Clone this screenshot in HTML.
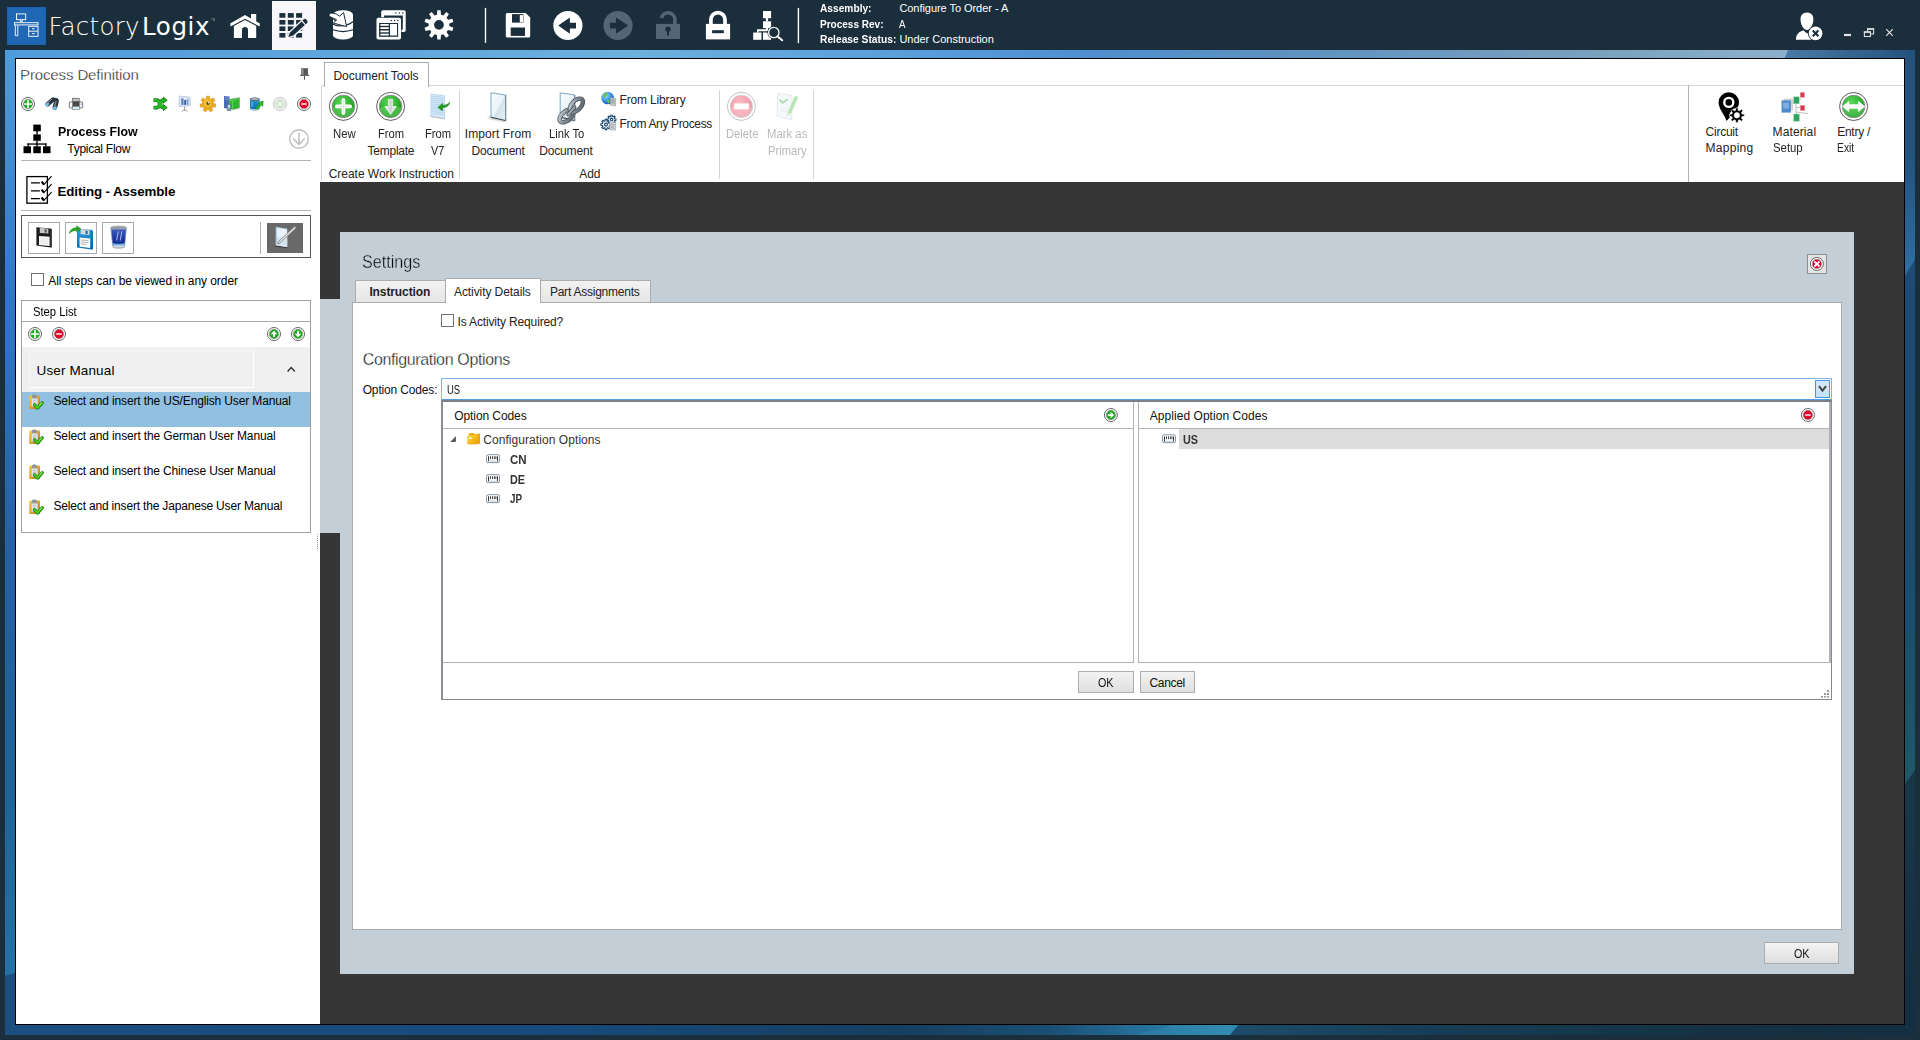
<!DOCTYPE html>
<html lang="en"><head><meta charset="utf-8"><title>FactoryLogix - Process Definition</title>
<style>
html,body{margin:0;padding:0;}
body{width:1920px;height:1040px;overflow:hidden;background:#1b2e3c;position:relative;font-family:"Liberation Sans",sans-serif;}
div,span,svg,label,button{position:absolute;box-sizing:border-box;}
.t{white-space:nowrap;display:block;}
svg{overflow:visible;}
.grp{left:0;top:0;width:0;height:0;}
</style></head><body>
<svg width="1920" height="1040" viewBox="0 0 1920 1040" style="left:0;top:0">
<defs>
<linearGradient id="gt" x1="5" x2="1915" y1="0" y2="0" gradientUnits="userSpaceOnUse">
<stop offset="0" stop-color="#4f9cdc"/><stop offset=".1" stop-color="#58a0dc"/><stop offset=".33" stop-color="#6cb0de"/>
<stop offset=".47" stop-color="#5a9edc"/><stop offset=".57" stop-color="#4f8fcf"/><stop offset=".67" stop-color="#5e92c0"/>
<stop offset=".83" stop-color="#7aa0be"/><stop offset=".93" stop-color="#8cb0cc"/><stop offset="1" stop-color="#8cb0cc"/></linearGradient>
<linearGradient id="gt2" x1="1785" x2="1915" y1="0" y2="0" gradientUnits="userSpaceOnUse">
<stop offset="0" stop-color="#4a7aa6"/><stop offset="1" stop-color="#24507c"/></linearGradient>
<linearGradient id="gl" x1="0" x2="0" y1="50" y2="1035" gradientUnits="userSpaceOnUse">
<stop offset="0" stop-color="#4f9cdc"/><stop offset=".25" stop-color="#2f78c8"/><stop offset=".5" stop-color="#2560a8"/>
<stop offset=".76" stop-color="#1f6496"/><stop offset=".93" stop-color="#2272a6"/><stop offset="1" stop-color="#2272a6"/></linearGradient>
<linearGradient id="gb" x1="5" x2="1915" y1="0" y2="0" gradientUnits="userSpaceOnUse">
<stop offset="0" stop-color="#1a4f80"/><stop offset=".3" stop-color="#174a7a"/><stop offset=".469" stop-color="#163e60"/>
<stop offset=".547" stop-color="#1a4f74"/><stop offset=".589" stop-color="#246c96"/><stop offset=".641" stop-color="#2f88b0"/><stop offset="1" stop-color="#2f88b0"/></linearGradient>
<linearGradient id="gb2" x1="1235" x2="1915" y1="0" y2="0" gradientUnits="userSpaceOnUse">
<stop offset="0" stop-color="#1c4c6a"/><stop offset=".25" stop-color="#173e58"/><stop offset=".7" stop-color="#143243"/><stop offset="1" stop-color="#122e40"/></linearGradient>
<linearGradient id="gr" x1="0" x2="0" y1="50" y2="1035" gradientUnits="userSpaceOnUse">
<stop offset="0" stop-color="#25517d"/><stop offset=".1" stop-color="#24527e"/><stop offset=".25" stop-color="#1d4a74"/><stop offset=".5" stop-color="#1b4a6e"/>
<stop offset=".7" stop-color="#1e5468"/><stop offset=".75" stop-color="#1f5868"/><stop offset="1" stop-color="#1f5868"/></linearGradient>
<linearGradient id="gr2" x1="0" x2="0" y1="150" y2="275" gradientUnits="userSpaceOnUse">
<stop offset="0" stop-color="#3274a8" stop-opacity="0"/><stop offset="1" stop-color="#3274a8" stop-opacity=".9"/></linearGradient>
<linearGradient id="gr3" x1="0" x2="0" y1="770" y2="1035" gradientUnits="userSpaceOnUse">
<stop offset="0" stop-color="#183848"/><stop offset="1" stop-color="#122e40"/></linearGradient>
</defs>
<rect x="0" y="0" width="1920" height="1040" fill="#1b2e3c"/>
<rect x="5" y="50" width="1910" height="10" fill="url(#gt)"/>
<polygon points="1788,50 1915,50 1915,60 1784,60" fill="url(#gt2)"/>
<rect x="5" y="1023" width="1910" height="12" fill="url(#gb)"/>
<polygon points="1135,1035 1172,1025 1232,1023 1232,1035" fill="#3a93b8" opacity=".35"/>
<polygon points="1240,1023 1915,1023 1915,1035 1230,1035" fill="url(#gb2)"/>
<polygon points="5,50 15,60 15,1025 5,1035" fill="url(#gl)"/>
<polygon points="5,976 15,973 15,1025 5,1035" fill="#1a4f80"/>
<polygon points="1915,50 1905,60 1905,1025 1915,1035" fill="url(#gr)"/>
<polygon points="1905,150 1915,150 1915,259 1905,276" fill="url(#gr2)"/>
<polygon points="1905,784 1915,770 1915,1035 1905,1025" fill="url(#gr3)"/>
</svg>
<div style="left:15px;top:58px;width:1890px;height:967px;background:#fff;border:1px solid #000;"></div>
<div id="titlebar" class="grp">
<svg width="1920" height="50" viewBox="0 0 1920 50" style="left:0;top:0">
<rect x="7" y="7" width="39" height="38" fill="#1d62ad"/><rect x="8.5" y="8.5" width="36" height="35" fill="#2068b6"/>
<g fill="none" stroke="#fff" stroke-width="0.9"><rect x="16.5" y="13.9" width="9.2" height="5.8"/><path d="M20.3,19.8v1.8h2v-1.8"/><rect x="14.5" y="22.7" width="23.5" height="2.2"/><path d="M15.3,25v10.7h2.5v-10.7"/><rect x="28.7" y="26.3" width="9.3" height="10"/><path d="M28.7,31.2h9.3M32,28.7h2.6M32,33.7h2.6"/></g>
<g fill="#fff"><path d="M230.2,23.4 L245,15.1 L251,18.5 V14 H256.2 V21.4 L259.9,23.4 L259.6,26.5 L245,18.7 L230.5,26.5Z"/><path d="M233.9,25.9 L245,20.1 L256.2,25.9 V37.9 H248 V30 a3,3 0 0,0 -6,0 V37.9 H233.9Z"/></g>
<rect x="272" y="1" width="44" height="49" fill="#f8f8fa"/>
<g fill="#1b2e3c"><rect x="279.4" y="13.1" width="6" height="4.6"/><rect x="279.4" y="20.0" width="6" height="4.6"/><rect x="279.4" y="26.4" width="6" height="4.6"/><rect x="279.4" y="33.0" width="6" height="4.6"/><rect x="287.8" y="13.1" width="6" height="4.6"/><rect x="287.8" y="20.0" width="6" height="4.6"/><rect x="287.8" y="26.4" width="6" height="4.6"/><rect x="287.8" y="33.0" width="6" height="4.6"/><rect x="296.1" y="13.1" width="6" height="4.6"/><rect x="296.1" y="20.0" width="6" height="4.6"/><rect x="296.1" y="26.4" width="6" height="4.6"/><rect x="296.1" y="33.0" width="6" height="4.6"/></g>
<path d="M288.0,37.1 L290.0,32.2 L303.3,19.6 a2.2,2.2 0 0,1 3.1,0 l0.7,0.8 a2.2,2.2 0 0,1 0,3.1 L293.6,35.6Z" fill="#f8f8fa" stroke="#f8f8fa" stroke-width="2.2" stroke-linejoin="round"/>
<path d="M288.2,36.9 L290.0,32.4 L301.6,21.4 L304.9,24.9 L293.2,35.5Z" fill="#1b2e3c"/>
<path d="M302.4,20.6 L303.6,19.5 a1.9,1.9 0 0,1 2.7,0.1 l0.8,0.9 a1.9,1.9 0 0,1 -0.1,2.7 L305.7,24.2Z" fill="#1b2e3c"/>
<g fill="#fff"><path d="M333,14.5 a10,4.3 0 0,1 20,0 V35.3 a10,4.3 0 0,1 -20,0Z"/></g>
<g fill="none" stroke="#1b2e3c" stroke-width="1.1"><path d="M333,24.2 q10,4.6 20,-2.4"/><path d="M333,29.8 q10,3.6 20,0"/></g>
<path d="M329.1,14.6 C329.5,12.6 333,12.9 336.3,14.0 L339.6,16.2 L343.6,12.6 L346.6,26.6 L333.2,23.0 L336.6,20.0 C333.5,17.3 328.6,17.6 329.1,14.6Z" fill="#fff" stroke="#1b2e3c" stroke-width="1" stroke-linejoin="miter"/>
<path d="M332.9,18.9 q3.5,-0.2 3.6,1.6 q-2.2,0.9 -3.6,-1.6Z" fill="#1b2e3c"/>
<rect x="381.2" y="10.2" width="24.5" height="21.8" rx="1.8" fill="#fff"/>
<path d="M384,15.4 H402.8 V29.5 H400 V18 H384Z" fill="#1b2e3c"/>
<g fill="#1b2e3c"><circle cx="396" cy="13" r="0.75"/><circle cx="399.4" cy="13" r="0.75"/><circle cx="402.8" cy="13" r="0.75"/></g>
<rect x="376" y="17.3" width="25.5" height="22.8" rx="2" fill="#1b2e3c"/>
<rect x="376.5" y="17.8" width="24.5" height="21.8" rx="1.8" fill="#fff"/>
<rect x="379.1" y="23" width="19" height="13.8" fill="#1b2e3c"/>
<g fill="#1b2e3c"><circle cx="391.4" cy="20.4" r="0.75"/><circle cx="394.6" cy="20.4" r="0.75"/><circle cx="397.9" cy="20.4" r="0.75"/></g>
<g fill="#fff"><rect x="380.4" y="24" width="8.4" height="1.8"/><rect x="380.4" y="27.2" width="8.4" height="1.8"/><rect x="380.4" y="30.5" width="8.4" height="1.8"/><rect x="380.4" y="33.7" width="8.4" height="1.8"/><rect x="390" y="24" width="7" height="11.5"/></g>
<path d="M436.95,14.66 L437.30,10.25 L440.62,10.25 L440.97,14.66 L443.33,15.42 L446.20,12.07 L448.89,14.02 L446.59,17.79 L448.04,19.79 L452.34,18.77 L453.36,21.92 L449.29,23.62 L449.29,26.10 L453.36,27.80 L452.34,30.95 L448.04,29.93 L446.59,31.93 L448.89,35.70 L446.20,37.65 L443.33,34.30 L440.97,35.06 L440.62,39.47 L437.30,39.47 L436.95,35.06 L434.59,34.30 L431.72,37.65 L429.03,35.70 L431.33,31.93 L429.88,29.93 L425.58,30.95 L424.56,27.80 L428.63,26.10 L428.63,23.62 L424.56,21.92 L425.58,18.77 L429.88,19.79 L431.33,17.79 L429.03,14.02 L431.72,12.07 L434.59,15.42Z M434.06,24.86 a4.9,4.9 0 1,0 9.8,0 a4.9,4.9 0 1,0 -9.8,0Z" fill="#fff" fill-rule="evenodd"/>
<rect x="484.8" y="7.9" width="1.4" height="35" fill="#fff"/>
<rect x="797.7" y="7.9" width="1.4" height="35.2" fill="#fff"/>
<path d="M507.3,13.1 H525.7 L530.2,17.4 V36.1 a1.5,1.5 0 0,1 -1.5,1.5 H507.3 a1.5,1.5 0 0,1 -1.5,-1.5 V14.6 a1.5,1.5 0 0,1 1.5,-1.5Z" fill="#fff"/>
<rect x="512" y="14.1" width="11.4" height="8.5" fill="#1b2e3c"/><rect x="519.8" y="15.1" width="3.2" height="7.2" fill="#fff"/>
<rect x="510.7" y="27.5" width="14.3" height="8.4" fill="#1b2e3c"/>
<circle cx="567.9" cy="25.5" r="14.6" fill="#fff"/><path d="M558.2,25.5 L569.9,17.4 V22.7 H576 V28.4 H569.9 V33.7Z" fill="#1b2e3c"/>
<circle cx="618" cy="25.5" r="14.6" fill="#546673"/><path d="M628.1,25.5 L616,17.4 V22.7 H610 V28.4 H616 V33.7Z" fill="#1b2e3c"/>
<rect x="656" y="23.9" width="24" height="15.1" fill="#546673"/>
<path d="M661.5,18 A6.8,6.8 0 0,1 674.9,19.6 V24" fill="none" stroke="#546673" stroke-width="3.6"/>
<circle cx="668" cy="29.2" r="2.6" fill="#1b2e3c"/><rect x="667" y="29.2" width="2" height="6.4" fill="#1b2e3c"/>
<rect x="705.9" y="23.9" width="24.2" height="15.5" fill="#fff"/>
<path d="M710.9,24 V19.6 A7.05,7.05 0 0,1 725,19.6 V24" fill="none" stroke="#fff" stroke-width="3.7"/>
<rect x="712.1" y="30.2" width="11.7" height="3" fill="#1b2e3c"/>
<g fill="#fff"><rect x="763" y="11" width="8.1" height="7.2"/><rect x="765.9" y="18" width="2.2" height="3.5"/><rect x="763" y="21.3" width="8.1" height="6.8"/><rect x="765.9" y="28" width="2.2" height="3"/><path d="M757,29.2 H767 V31.2 H758.6 V32.6 H757Z"/><rect x="753.2" y="32.5" width="8.3" height="7.3"/><rect x="763" y="32.5" width="8.1" height="7.3"/></g>
<circle cx="773.8" cy="32.5" r="6.4" fill="#1b2e3c"/><path d="M777.6,36.6 L782.3,40.6" stroke="#1b2e3c" stroke-width="3.6" stroke-linecap="round"/>
<circle cx="773.8" cy="32.5" r="5.2" fill="#1b2e3c" stroke="#fff" stroke-width="1.3"/><path d="M777.6,36.4 L782.2,40.3" stroke="#fff" stroke-width="2" stroke-linecap="round"/>
<path d="M1807,12.6 C1811.2,12.6 1813.5,15.6 1813.4,19.6 C1813.3,24.4 1810.6,30 1807,30 C1803.4,30 1800.6,24.4 1800.5,19.6 C1800.4,15.6 1802.8,12.6 1807,12.6Z" fill="#fff"/>
<path d="M1795.9,39.7 C1796.2,35.5 1797.3,32.5 1803.2,30.2 L1807,33.6 L1810.8,30.2 C1814,31.4 1816,32.6 1817,34.5 L1817,39.7Z" fill="#fff"/>
<circle cx="1815.6" cy="33.4" r="7.7" fill="#1b2e3c"/><circle cx="1815.6" cy="33.4" r="6.8" fill="#fff"/>
<path d="M1812.8,30.6 L1818.4,36.2 M1818.4,30.6 L1812.8,36.2" stroke="#1b2e3c" stroke-width="2.1"/>
<rect x="1844" y="33.9" width="7" height="2.2" fill="#e2e2e2"/>
<g fill="#1b2e3c" stroke="#dedede" stroke-width="1.1"><rect x="1867.6" y="28.9" width="6" height="5"/><rect x="1864.4" y="32" width="6" height="4.5"/></g><rect x="1867" y="28.2" width="7.2" height="1.6" fill="#dedede"/><rect x="1863.8" y="31.3" width="7.2" height="1.6" fill="#dedede"/>
<path d="M1886.2,29.2 L1892.8,35.8 M1892.8,29.2 L1886.2,35.8" stroke="#e0e0e0" stroke-width="1.2"/>
</svg>
<span class="t" style='left:48.5px;top:15px;font:200 24.5px/1 "DejaVu Sans", sans-serif;letter-spacing:0.251px;color:#fff;'>Factory</span>
<span class="t" style='left:142px;top:15px;font:400 24.5px/1 "DejaVu Sans", sans-serif;letter-spacing:0.608px;color:#fff;'>Logix</span>
<span class="t" style='left:211.0px;top:18.5px;font:400 3.5px/1 "Liberation Sans", sans-serif;letter-spacing:0px;color:#8a97a3;transform:scaleX(0.8758);transform-origin:0 0;'>TM</span>
<span class="t" style='left:819.6px;top:3px;font:700 11px/1 "Liberation Sans", sans-serif;letter-spacing:0px;color:#fff;transform:scaleX(0.9259);transform-origin:0 0;'>Assembly:</span>
<span class="t" style='left:899.4px;top:3px;font:400 11px/1 "Liberation Sans", sans-serif;letter-spacing:-0.048px;color:#fff;'>Configure To Order - A</span>
<span class="t" style='left:819.6px;top:19px;font:700 11px/1 "Liberation Sans", sans-serif;letter-spacing:0px;color:#fff;transform:scaleX(0.911);transform-origin:0 0;'>Process Rev:</span>
<span class="t" style='left:899.4px;top:19px;font:400 11px/1 "Liberation Sans", sans-serif;letter-spacing:0px;color:#fff;transform:scaleX(0.8875);transform-origin:0 0;'>A</span>
<span class="t" style='left:819.6px;top:34px;font:700 11px/1 "Liberation Sans", sans-serif;letter-spacing:0px;color:#fff;transform:scaleX(0.9316);transform-origin:0 0;'>Release Status:</span>
<span class="t" style='left:899.4px;top:34px;font:400 11px/1 "Liberation Sans", sans-serif;letter-spacing:-0.021px;color:#fff;'>Under Construction</span>
</div>
<div id="process-definition" class="grp">
<span class="t" style='left:20px;top:67px;font:400 15px/1 "Liberation Sans", sans-serif;letter-spacing:-0.12px;color:#1c1c1c;-webkit-text-stroke:0.3px #fff;'>Process Definition</span>
<span class="t" style='left:57.7px;top:124.5px;font:700 13.33px/1 "Liberation Sans", sans-serif;letter-spacing:0px;color:#000;transform:scaleX(0.9277);transform-origin:0 0;'>Process Flow</span>
<span class="t" style='left:67.3px;top:143px;font:400 12px/1 "Liberation Sans", sans-serif;letter-spacing:-0.268px;color:#000;'>Typical Flow</span>
<div style="left:21px;top:160px;width:290px;height:1px;background:#b5b5b5;"></div>
<span class="t" style='left:57.5px;top:185px;font:700 13.33px/1 "Liberation Sans", sans-serif;letter-spacing:-0.098px;color:#000;'>Editing - Assemble</span>
<div style="left:21px;top:210px;width:290px;height:1px;background:#b5b5b5;"></div>
<div style="left:21px;top:215px;width:290px;height:43px;background:#fff;border:1px solid #555;"></div>
<div style="left:28px;top:222px;width:32px;height:32px;background:#fff;border:1px solid #ababab;"></div>
<div style="left:65px;top:222px;width:32px;height:32px;background:#fff;border:1px solid #ababab;"></div>
<div style="left:102px;top:222px;width:32px;height:32px;background:#fff;border:1px solid #ababab;"></div>
<div style="left:260px;top:222px;width:1px;height:32px;background:#b4b4b4;"></div>
<div style="left:267px;top:223px;width:36px;height:30px;background:#696969;"></div>
<div style="left:31px;top:273px;width:13px;height:13px;background:#fff;border:1px solid #707070;"></div>
<span class="t" style='left:48.2px;top:275px;font:400 12px/1 "Liberation Sans", sans-serif;letter-spacing:-0.066px;color:#000;'>All steps can be viewed in any order</span>
<div style="left:21px;top:300px;width:290px;height:233px;background:#fff;border:1px solid #a0a0a0;"></div>
<span class="t" style='left:33.0px;top:306px;font:400 12px/1 "Liberation Sans", sans-serif;letter-spacing:0px;color:#000;transform:scaleX(0.9354);transform-origin:0 0;'>Step List</span>
<div style="left:22px;top:321px;width:288px;height:1px;background:#a8a8a8;"></div>
<div style="left:22px;top:347px;width:288px;height:45px;background:#f0f0f0;"></div>
<div style="left:29px;top:351px;width:225px;height:37px;background:#f0f0f0;border:1px solid #fff;border-top-color:#f6f6f6;border-left-color:#f6f6f6;"></div>
<span class="t" style='left:36.5px;top:364px;font:400 13.5px/1 "Liberation Sans", sans-serif;letter-spacing:0.137px;color:#000;'>User Manual</span>
<div style="left:22px;top:392px;width:288px;height:35px;background:#92c0e0;"></div>
<span class="t" style='left:53.5px;top:394.5px;font:400 12px/1 "Liberation Sans", sans-serif;letter-spacing:-0.139px;color:#000;'>Select and insert the US/English User Manual</span>
<span class="t" style='left:53.5px;top:429.5px;font:400 12px/1 "Liberation Sans", sans-serif;letter-spacing:-0.135px;color:#000;'>Select and insert the German User Manual</span>
<span class="t" style='left:53.5px;top:464.5px;font:400 12px/1 "Liberation Sans", sans-serif;letter-spacing:-0.149px;color:#000;'>Select and insert the Chinese User Manual</span>
<span class="t" style='left:53.5px;top:499.5px;font:400 12px/1 "Liberation Sans", sans-serif;letter-spacing:-0.177px;color:#000;'>Select and insert the Japanese User Manual</span>
<svg width="320" height="560" viewBox="0 0 320 560" style="left:0;top:0">
<defs><linearGradient id="gclip" x1="0" x2="1" y1="0" y2="1"><stop offset="0" stop-color="#f6d24a"/><stop offset=".5" stop-color="#e0a030"/><stop offset="1" stop-color="#b87420"/></linearGradient><linearGradient id="gsil" x1="0" x2="1" y1="0" y2="0"><stop offset="0" stop-color="#777"/><stop offset=".5" stop-color="#ddd"/><stop offset="1" stop-color="#555"/></linearGradient><linearGradient id="gblue" x1="0" x2="0" y1="0" y2="1"><stop offset="0" stop-color="#2aa0dc"/><stop offset="1" stop-color="#0a6aa8"/></linearGradient><linearGradient id="gbin" x1="0" x2="0" y1="0" y2="1"><stop offset="0" stop-color="#c8d0d8"/><stop offset=".14" stop-color="#3a56b8"/><stop offset=".62" stop-color="#1c2f9a"/><stop offset=".78" stop-color="#3c8ee0"/><stop offset=".9" stop-color="#d4dce4"/><stop offset="1" stop-color="#b8c0c8"/></linearGradient></defs>
<g><rect x="301.3" y="68.2" width="6.6" height="6.7" fill="#555"/><rect x="301.3" y="68.2" width="2.4" height="6.7" fill="#8c8c8c"/><rect x="300.1" y="74.7" width="9" height="1.2" fill="#555"/><rect x="304" y="75.8" width="1" height="3.9" fill="#555"/></g>
<g><circle cx="28" cy="104" r="6.50" fill="#fff" stroke="#676767" stroke-width="1.00"/><circle cx="28" cy="104" r="4.65" fill="#1fae1f" stroke="#8d8d8d" stroke-width="0.60"/><path d="M24.1,104H31.9M28,100.1V107.9" stroke="#fff" stroke-width="1.6"/></g>
<g stroke-linecap="round"><path d="M52.8,99.8 L47.6,104.2" stroke="#2c3640" stroke-width="4.4"/><path d="M56.6,100.8 L54.8,107.6" stroke="#2c3640" stroke-width="4.6"/><path d="M53,98.6 L57,99.4" stroke="#2c3640" stroke-width="2.2"/><path d="M51.6,99.4 L47.4,103" stroke="#9aa6b2" stroke-width="0.9"/><path d="M56,101.4 L54.6,106.4" stroke="#9aa6b2" stroke-width="0.9"/></g><ellipse cx="47.2" cy="104.6" rx="2.3" ry="1.5" transform="rotate(-40 47.2 104.6)" fill="#6ec0ee"/><ellipse cx="54.6" cy="108.2" rx="2.4" ry="1.5" transform="rotate(-12 54.6 108.2)" fill="#6ec0ee"/>
<g><rect x="72.6" y="98.2" width="6.6" height="4" fill="#bdbdbd" stroke="#555" stroke-width="0.6"/><rect x="69.3" y="101.8" width="13.4" height="6.2" rx="1" fill="#f4f4f4" stroke="#444" stroke-width="0.7"/><rect x="72.4" y="101.6" width="7.2" height="5" fill="#4a4a4a"/><rect x="72.4" y="106.4" width="7.2" height="3.2" fill="#d6f0f4" stroke="#555" stroke-width="0.5"/><rect x="80.6" y="103.6" width="0.9" height="0.9" fill="#2a4cff"/></g>
<g fill="none" stroke-linejoin="round"><path d="M153.6,100.2 H157 C160,100.2 160,107.6 163,107.6 H164.6 M153.6,107.6 H157 C160,107.6 160,100.2 163,100.2 H164.6" stroke="#0f7a0f" stroke-width="3.8"/><path d="M163.4,97.2 L167.2,100.2 L163.4,103.2Z M163.4,104.6 L167.2,107.6 L163.4,110.6Z" fill="#22b022" stroke="#0f7a0f" stroke-width="0.9"/><path d="M153.6,100.2 H157 C160,100.2 160,107.6 163,107.6 H164.6 M153.6,107.6 H157 C160,107.6 160,100.2 163,100.2 H164.6" stroke="#2cc02c" stroke-width="2"/></g>
<g><path d="M179.2,96 L190.2,97.2 V105.6 L179.2,106.6Z" fill="#dfeaf8" stroke="#9ab0d0" stroke-width="0.6"/><rect x="181.3" y="98.3" width="2.2" height="6.6" fill="#5a7fc0"/><rect x="184.3" y="100" width="1.8" height="4.9" fill="#2f4f9a"/><rect x="186.8" y="99" width="1.6" height="5.9" fill="#7a9ad0"/><path d="M184.6,106.4 V110.6 M184.6,109.6 L181.8,111.4 M184.6,109.6 L187.4,111.4" stroke="#888" stroke-width="0.8" fill="none"/></g>
<path d="M206.27,98.67 L206.50,96.14 L209.50,96.14 L209.73,98.67 L211.09,99.33 L213.21,97.93 L215.08,100.27 L213.24,102.03 L213.58,103.50 L215.99,104.29 L215.33,107.21 L212.81,106.87 L211.87,108.05 L212.76,110.43 L210.06,111.73 L208.75,109.55 L207.25,109.55 L205.94,111.73 L203.24,110.43 L204.13,108.05 L203.19,106.87 L200.67,107.21 L200.01,104.29 L202.42,103.50 L202.76,102.03 L200.92,100.27 L202.79,97.93 L204.91,99.33Z" fill="#eaa820" stroke="#c88a10" stroke-width="0.5"/><circle cx="207.4" cy="103" r="4" fill="#f6c63a" opacity=".7"/><circle cx="208" cy="103.4" r="1.6" fill="#5a4a10"/><circle cx="208.6" cy="102.8" r="0.7" fill="#fff"/>
<g><path d="M224,96 L229.6,96.6 V109 L224,108Z" fill="#4a6cb4"/><path d="M225,97.6 h3.6 M225,99.4 h3.6" stroke="#9ab4e4" stroke-width="0.6"/><path d="M229.2,99.4 L239.6,97.6 V108 L232.4,109.8 L229.2,108.4Z" fill="#2cb82c" stroke="#8a9a8a" stroke-width="0.5"/><path d="M229.2,99.4 L232.6,101 L239.6,97.6 M232.6,101 V109.6" stroke="#7be07b" stroke-width="0.6" fill="none"/><rect x="227.2" y="104.2" width="3.6" height="6.6" fill="#8aa0b8" stroke="#5a6a7a" stroke-width="0.5"/><rect x="228" y="105.2" width="2" height="2.4" fill="#cfe4f4"/></g>
<g><path d="M250,99.2 a4.8,1.8 0 0,1 9.6,0 V108.6 a4.8,1.8 0 0,1 -9.6,0Z" fill="url(#gblue)"/><ellipse cx="254.8" cy="99.2" rx="4.8" ry="1.8" fill="#667078"/><ellipse cx="254.8" cy="99" rx="3.6" ry="1.1" fill="#a8b0b8"/><path d="M250.4,108.4 a4.6,1.7 0 0,0 9,0" fill="none" stroke="#c8d4dc" stroke-width="1"/><path d="M252,101.6 V107" stroke="#8ad0f4" stroke-width="0.8"/><path d="M255.6,108.4 L259.6,103.6 L258,102.4 L263.2,101 L262.8,106.4 L261.4,105 L257.6,109.6Z" fill="#2cb82c" stroke="#18861a" stroke-width="0.5"/></g>
<g opacity="0.42"><circle cx="280" cy="104" r="6.50" fill="#fff" stroke="#676767" stroke-width="1.00"/><circle cx="280" cy="104" r="4.65" fill="#8fd48f" stroke="#8d8d8d" stroke-width="0.60"/><path d="M277.4,104 h3 l-1.4,-1.6 M282.6,104 h-3 l1.4,1.6" stroke="#fff" stroke-width="1.2" fill="none"/></g>
<g><circle cx="304" cy="104" r="6.50" fill="#fff" stroke="#676767" stroke-width="1.00"/><circle cx="304" cy="104" r="4.65" fill="#e4002b" stroke="#8d8d8d" stroke-width="0.60"/><path d="M301.2,104H306.8" stroke="#fff" stroke-width="1.4"/></g>
<g fill="#000"><rect x="33.3" y="124.6" width="7.5" height="6.7"/><rect x="36.3" y="131" width="1.4" height="3.6"/><rect x="33.3" y="134.4" width="7.5" height="6.4"/><rect x="36.3" y="140.6" width="1.4" height="6"/><rect x="27.5" y="143.4" width="19" height="1.3"/><rect x="27.5" y="143.4" width="1.3" height="3.2"/><rect x="45.2" y="143.4" width="1.3" height="3.2"/><rect x="23.5" y="146.3" width="7.5" height="6.9"/><rect x="33.3" y="146.3" width="7.5" height="6.9"/><rect x="43" y="146.3" width="7.5" height="6.9"/></g>
<g fill="none" stroke="#bdbdbd" stroke-width="1.4"><circle cx="299" cy="139" r="9.3"/><path d="M299,133 V144.4 M293.2,138.6 L299,144.6 L304.8,138.6"/></g>
<g fill="none" stroke="#000"><rect x="26.9" y="176.6" width="20.5" height="26.6" stroke-width="1.3"/><path d="M31,182.8H39.9M31,190.8H39.9M31,198.7H39.9" stroke-width="1.3"/>
<path d="M41.6,181.60000000000002 L44,184.60000000000002" stroke-width="2.2"/><path d="M43.6,184.8 L51.6,176.20000000000002" stroke-width="1.1"/>
<path d="M41.6,189.60000000000002 L44,192.60000000000002" stroke-width="2.2"/><path d="M43.6,192.8 L51.6,184.20000000000002" stroke-width="1.1"/>
<path d="M41.6,197.5 L44,200.5" stroke-width="2.2"/><path d="M43.6,200.7 L51.6,192.1" stroke-width="1.1"/>
</g>
<g transform="translate(36,227)"><path d="M0.4,0.2 L14.4,1.6 a1.6,1.6 0 0,1 1.6,1.6 V19.6 a1,1 0 0,1 -1.2,1 L0.4,18.6Z" fill="#1c1c1c"/><path d="M3.8,0.8 L12.4,1.8 V6.6 L3.8,6Z" fill="#c9c9c9"/><rect x="8.6" y="2.4" width="2" height="3.2" fill="#555"/><path d="M3,9 L13.6,9.8 V19 L3,18Z" fill="#fafafa"/><path d="M4.2,11.6 l8.2,0.6 M4.2,13.8 l8.2,0.6 M4.2,16 l8.2,0.6" stroke="#c8c8c8" stroke-width="0.5"/><path d="M15.2,3 V20" stroke="#666" stroke-width="0.8"/></g>
<g transform="translate(65,222)"><path d="M12,6.5 L26.2,7.8 a1.8,1.8 0 0,1 1.8,1.8 V26.6 a1,1 0 0,1 -1.2,1 L12,25.5Z" fill="url(#gblue)"/><path d="M26.9,8.6 V27.2" stroke="#0a5a94" stroke-width="1"/><path d="M15.6,6.9 L24.4,7.7 V13 L15.6,12.2Z" fill="#d4d8dc"/><rect x="20.6" y="8.6" width="2" height="3.6" fill="#1a6ab0"/><path d="M14.6,15.4 L25.2,16.4 V26 L14.6,24.8Z" fill="#fafafa"/><path d="M15.8,18 l7.8,0.7 M15.8,20 l7.8,0.7 M15.8,22 l5.6,0.5" stroke="#888" stroke-width="0.6"/><path d="M4.2,11.8 C5.2,7.2 8.6,5.8 11.6,5.6 V3.6 L16,7 L11.6,10.2 V8.4 C8.6,8.4 6.2,9.4 4.2,11.8Z" fill="#28a428" stroke="#1a841a" stroke-width="0.4"/></g>
<g transform="translate(102,222)"><path d="M8.8,5.6 H24.4 L22.6,25 a5.8,1.2 0 0,1 -11.8,0Z" fill="url(#gbin)" stroke="#8a96a4" stroke-width="0.7"/><ellipse cx="16.6" cy="5.6" rx="7.8" ry="1.5" fill="#c4ccd4" stroke="#7a8490" stroke-width="0.7"/><ellipse cx="16.6" cy="5.8" rx="6.6" ry="0.9" fill="#8a949e"/><path d="M16.4,9.4 l-1.8,9 M19.8,9.4 l-1.6,9" stroke="#9ab4ee" stroke-width="1.1"/><path d="M10.8,19.8 q5.8,2 11.6,0" fill="none" stroke="#10207a" stroke-width="1.6"/></g>
<g><path d="M275.6,245.4 L287.4,247.6 L287.4,248.2 L274.6,246.4Z" fill="#3a3a3a"/><path d="M275.9,227.2 L287.2,228.9 V247.1 L275.9,245.2Z" fill="#e9f2f8"/><path d="M275.9,236.6 L287.2,238.4 V247.1 L275.9,245.2Z" fill="#d4e4ee"/><path d="M276.2,227.3 V245.2" stroke="#8fb8d6" stroke-width="0.9"/><path d="M275.9,227.3 L287.2,229" stroke="#a8cce4" stroke-width="0.7"/><path d="M278.8,242.8 L295,227.5" stroke="#8a8a8a" stroke-width="2.6" stroke-linecap="round"/><path d="M279.4,242.2 L294.8,227.7" stroke="#e4e4e4" stroke-width="1.3" stroke-linecap="round"/></g>
<g><circle cx="35" cy="334" r="6.50" fill="#fff" stroke="#676767" stroke-width="1.00"/><circle cx="35" cy="334" r="4.65" fill="#1fae1f" stroke="#8d8d8d" stroke-width="0.60"/><path d="M31.1,334H38.9M35,330.1V337.9" stroke="#fff" stroke-width="1.6"/></g>
<g><circle cx="59" cy="334" r="6.50" fill="#fff" stroke="#676767" stroke-width="1.00"/><circle cx="59" cy="334" r="4.65" fill="#e4002b" stroke="#8d8d8d" stroke-width="0.60"/><path d="M56.2,334H61.8" stroke="#fff" stroke-width="1.4"/></g>
<g><circle cx="274" cy="334" r="6.50" fill="#fff" stroke="#676767" stroke-width="1.00"/><circle cx="274" cy="334" r="4.65" fill="#1fae1f" stroke="#8d8d8d" stroke-width="0.60"/><path d="M274,330.8 L277.2,334.3 H275 V337 H273 V334.3 H270.8Z" fill="#fff"/></g>
<g><circle cx="298" cy="334" r="6.50" fill="#fff" stroke="#676767" stroke-width="1.00"/><circle cx="298" cy="334" r="4.65" fill="#1fae1f" stroke="#8d8d8d" stroke-width="0.60"/><path d="M298,337.2 L301.2,333.7 H299 V331 H297 V333.7 H294.8Z" fill="#fff"/></g>
<path d="M287.6,371.4 L291.2,367.6 L294.8,371.4" fill="none" stroke="#333" stroke-width="1.5"/>
<g transform="translate(29,394)"><rect x="0.2" y="1.6" width="10.8" height="13.4" rx="1" fill="url(#gclip)"/><rect x="2.3" y="4.3" width="6.5" height="8.3" fill="#e2e7ec" stroke="#aab4c2" stroke-width="0.5"/><path d="M3.3,0.9 h4.2 l0.6,2.8 h-5.4z" fill="#8a8f9e"/><circle cx="5.4" cy="0.9" r="1" fill="#9a9fae"/><path d="M3.7,6.3h3.4M3.7,8.3h3.4" stroke="#aab0b8" stroke-width="0.7"/><path d="M5.6,10.8 L8.4,14 L13.2,8.8" fill="none" stroke="#1f8a12" stroke-width="3.4" stroke-linecap="round" stroke-linejoin="round"/><path d="M5.7,10.9 L8.4,13.8 L13,8.9" fill="none" stroke="#4cc81e" stroke-width="1.9" stroke-linecap="round" stroke-linejoin="round"/><path d="M10.6,10.8 L12.6,8.9" fill="none" stroke="#b5f08a" stroke-width="0.9" stroke-linecap="round"/></g>
<g transform="translate(29,429)"><rect x="0.2" y="1.6" width="10.8" height="13.4" rx="1" fill="url(#gclip)"/><rect x="2.3" y="4.3" width="6.5" height="8.3" fill="#e2e7ec" stroke="#aab4c2" stroke-width="0.5"/><path d="M3.3,0.9 h4.2 l0.6,2.8 h-5.4z" fill="#8a8f9e"/><circle cx="5.4" cy="0.9" r="1" fill="#9a9fae"/><path d="M3.7,6.3h3.4M3.7,8.3h3.4" stroke="#aab0b8" stroke-width="0.7"/><path d="M5.6,10.8 L8.4,14 L13.2,8.8" fill="none" stroke="#1f8a12" stroke-width="3.4" stroke-linecap="round" stroke-linejoin="round"/><path d="M5.7,10.9 L8.4,13.8 L13,8.9" fill="none" stroke="#4cc81e" stroke-width="1.9" stroke-linecap="round" stroke-linejoin="round"/><path d="M10.6,10.8 L12.6,8.9" fill="none" stroke="#b5f08a" stroke-width="0.9" stroke-linecap="round"/></g>
<g transform="translate(29,464)"><rect x="0.2" y="1.6" width="10.8" height="13.4" rx="1" fill="url(#gclip)"/><rect x="2.3" y="4.3" width="6.5" height="8.3" fill="#e2e7ec" stroke="#aab4c2" stroke-width="0.5"/><path d="M3.3,0.9 h4.2 l0.6,2.8 h-5.4z" fill="#8a8f9e"/><circle cx="5.4" cy="0.9" r="1" fill="#9a9fae"/><path d="M3.7,6.3h3.4M3.7,8.3h3.4" stroke="#aab0b8" stroke-width="0.7"/><path d="M5.6,10.8 L8.4,14 L13.2,8.8" fill="none" stroke="#1f8a12" stroke-width="3.4" stroke-linecap="round" stroke-linejoin="round"/><path d="M5.7,10.9 L8.4,13.8 L13,8.9" fill="none" stroke="#4cc81e" stroke-width="1.9" stroke-linecap="round" stroke-linejoin="round"/><path d="M10.6,10.8 L12.6,8.9" fill="none" stroke="#b5f08a" stroke-width="0.9" stroke-linecap="round"/></g>
<g transform="translate(29,499)"><rect x="0.2" y="1.6" width="10.8" height="13.4" rx="1" fill="url(#gclip)"/><rect x="2.3" y="4.3" width="6.5" height="8.3" fill="#e2e7ec" stroke="#aab4c2" stroke-width="0.5"/><path d="M3.3,0.9 h4.2 l0.6,2.8 h-5.4z" fill="#8a8f9e"/><circle cx="5.4" cy="0.9" r="1" fill="#9a9fae"/><path d="M3.7,6.3h3.4M3.7,8.3h3.4" stroke="#aab0b8" stroke-width="0.7"/><path d="M5.6,10.8 L8.4,14 L13.2,8.8" fill="none" stroke="#1f8a12" stroke-width="3.4" stroke-linecap="round" stroke-linejoin="round"/><path d="M5.7,10.9 L8.4,13.8 L13,8.9" fill="none" stroke="#4cc81e" stroke-width="1.9" stroke-linecap="round" stroke-linejoin="round"/><path d="M10.6,10.8 L12.6,8.9" fill="none" stroke="#b5f08a" stroke-width="0.9" stroke-linecap="round"/></g>
<path d="M317.5,534 V549" stroke="#9a9a9a" stroke-width="1" stroke-dasharray="1,1"/>
</svg>
</div>
<div id="ribbon" class="grp">
<div style="left:322px;top:85px;width:1582px;height:1px;background:#d5d5d5;"></div>
<div style="left:321px;top:86px;width:1px;height:95px;background:#d0d0d0;"></div>
<div style="left:324px;top:62px;width:105px;height:25px;background:#fff;border:1px solid #acacac;border-bottom:none;"></div>
<span class="t" style='left:333.5px;top:70px;font:400 12px/1 "Liberation Sans", sans-serif;letter-spacing:-0.057px;color:#222;'>Document Tools</span>
<svg width="1920" height="200" viewBox="0 0 1920 200" style="left:0;top:0">
<defs><radialGradient id="gbigG" cx=".4" cy=".3" r=".8"><stop offset="0" stop-color="#5ad65a"/><stop offset=".6" stop-color="#27ae27"/><stop offset="1" stop-color="#169016"/></radialGradient><radialGradient id="gbigR" cx=".4" cy=".3" r=".8"><stop offset="0" stop-color="#ff4a5e"/><stop offset=".6" stop-color="#e4002b"/><stop offset="1" stop-color="#b80020"/></radialGradient><linearGradient id="gpage" x1="0" x2="1" y1="0" y2="1"><stop offset="0" stop-color="#fafdff"/><stop offset=".5" stop-color="#eaf3f8"/><stop offset=".55" stop-color="#d4e2ea"/><stop offset="1" stop-color="#e6f0f5"/></linearGradient><linearGradient id="gwh" x1="0" x2="1" y1="0" y2="0"><stop offset="0" stop-color="#fff"/><stop offset=".5" stop-color="#cfcfcf"/><stop offset="1" stop-color="#fff"/></linearGradient><linearGradient id="gchain" x1="0" x2="1" y1="0" y2="1"><stop offset="0" stop-color="#c8d0d6"/><stop offset=".5" stop-color="#7d8891"/><stop offset="1" stop-color="#59646e"/></linearGradient><radialGradient id="gglobe" cx=".35" cy=".3" r=".8"><stop offset="0" stop-color="#9adcff"/><stop offset=".6" stop-color="#2a8ae0"/><stop offset="1" stop-color="#2a3ca0"/></radialGradient><filter id="blur1" x="-20%" y="-100%" width="140%" height="300%"><feGaussianBlur stdDeviation="0.8"/></filter></defs>
<g><circle cx="343.4" cy="106.4" r="14" fill="#fff" stroke="#5c5c5c" stroke-width="1"/><circle cx="343.4" cy="106.4" r="11.25" fill="url(#gbigG)" stroke="#8a8a8a" stroke-width="0.9"/><path d="M332.4,107.9 Q343.4,103.4 354.4,107.9 A11.2,11.2 0 0,1 332.4,107.9Z" fill="#8fe08f" opacity=".35"/><path d="M336.59999999999997,106.4H350.2M343.4,99.80000000000001V113.2" stroke="#fff" stroke-width="3.6" stroke-linecap="round"/><path d="M336.59999999999997,106.4H350.2M343.4,100.0V113.2" stroke="#d4d4d4" stroke-width="0.6"/></g>
<g><circle cx="390.6" cy="106.4" r="14" fill="#fff" stroke="#5c5c5c" stroke-width="1"/><circle cx="390.6" cy="106.4" r="11.25" fill="url(#gbigG)" stroke="#8a8a8a" stroke-width="0.9"/><path d="M379.6,107.9 Q390.6,103.4 401.6,107.9 A11.2,11.2 0 0,1 379.6,107.9Z" fill="#8fe08f" opacity=".35"/><path d="M388.55,99.30000000000001 H392.65000000000003 V106.60000000000001 H396.3 L390.6,114.4 L384.90000000000003,106.60000000000001 H388.55Z" fill="url(#gwh)" stroke="#fff" stroke-width="0.6"/></g>
<path d="M430.9,94.2 L444.7,95.7 V118.6 L430.9,116.1Z" fill="#d5e8f8" stroke="#a4c4e0" stroke-width="0.6"/>
<path d="M432,96.2 L443.6,97.6M432,98.1 L443.6,99.5M432,100.0 L443.6,101.4M432,101.9 L443.6,103.3M432,103.8 L443.6,105.2M432,105.7 L443.6,107.1M432,107.6 L443.6,109.0M432,109.5 L443.6,110.9M432,111.4 L443.6,112.8M432,113.3 L443.6,114.7" stroke="#a9cdea" stroke-width="0.7"/>
<path d="M430.2,116.4 L444.9,119.1" stroke="#b8b8b8" stroke-width="0.8"/>
<path d="M449.8,101.9 C449.4,105.6 446.4,107.6 442.6,107.6 V110.9 L437.8,107.4 L442.6,103.2 V105.2 C445.6,105.2 448.2,104.4 449.8,101.9Z" fill="#1f9a1f" stroke="#147814" stroke-width="0.4"/>
<path d="M488,117.8 L506.40000000000003,121.6 L503.8,119.6 L491,116.2Z" fill="#2a2a2a" opacity=".55" filter="url(#blur1)"/><path d="M491,92.8 L505.8,95 L505.8,120.6 L491,117.2Z" fill="url(#gpage)"/><path d="M491,117.2 V92.8 L505.8,95" fill="none" stroke="#6f9fc0" stroke-width="0.9"/><path d="M505.8,95 V120.6" fill="none" stroke="#4a6478" stroke-width="0.9"/><path d="M491,117.2 L505.8,120.6" fill="none" stroke="#33434f" stroke-width="1"/>
<path d="M557.2,117.6 L575.4,121.5 L572.8,119.5 L560.2,116Z" fill="#2a2a2a" opacity=".55" filter="url(#blur1)"/><path d="M560.2,92.8 L574.8,95 L574.8,120.5 L560.2,117Z" fill="url(#gpage)"/><path d="M560.2,117 V92.8 L574.8,95" fill="none" stroke="#6f9fc0" stroke-width="0.9"/><path d="M574.8,95 V120.5" fill="none" stroke="#4a6478" stroke-width="0.9"/><path d="M560.2,117 L574.8,120.5" fill="none" stroke="#33434f" stroke-width="1"/>
<g fill="none" stroke-linecap="round"><ellipse cx="566.5" cy="116" rx="8.2" ry="4.6" transform="rotate(-40 566.5 116)" stroke="#4a545c" stroke-width="4.4"/><ellipse cx="566.5" cy="116" rx="8.2" ry="4.6" transform="rotate(-40 566.5 116)" stroke="url(#gchain)" stroke-width="3"/><ellipse cx="576.4" cy="105.4" rx="8.2" ry="4.6" transform="rotate(-47 576.4 105.4)" stroke="#4a545c" stroke-width="4.4"/><ellipse cx="576.4" cy="105.4" rx="8.2" ry="4.6" transform="rotate(-47 576.4 105.4)" stroke="url(#gchain)" stroke-width="3"/><path d="M568.2,114.4 L574.6,107.2" stroke="#4a545c" stroke-width="3.6"/><path d="M568.2,114.4 L574.6,107.2" stroke="#a4adb5" stroke-width="2"/></g>
<circle cx="607.6" cy="98" r="6.3" fill="url(#gglobe)"/><path d="M603.4,94.6 q2.4,-2.4 4.4,-1.6 q0.6,1.8 -1.2,3 q-1.8,0.4 -2,2.2 q-1.6,-1.4 -1.2,-3.6Z M606.6,99.6 q2,-0.4 3,1 q0.4,2 -1.2,3.2 q-1.6,-1.6 -1.8,-4.2Z" fill="#6cc24a"/><path d="M610.4,97.4 L615.6,98.4 V106 L610.4,105.2Z" fill="#c4c8cc" stroke="#8a9096" stroke-width="0.5"/><path d="M611.4,99.4 l3.2,0.6 M611.4,101 l3.2,0.6 M611.4,102.6 l3.2,0.6" stroke="#7a8086" stroke-width="0.6"/>
<path d="M605.00,120.94 L605.19,119.36 L606.81,119.36 L607.00,120.94 L607.81,121.27 L609.06,120.29 L610.21,121.44 L609.23,122.69 L609.56,123.50 L611.14,123.69 L611.14,125.31 L609.56,125.50 L609.23,126.31 L610.21,127.56 L609.06,128.71 L607.81,127.73 L607.00,128.06 L606.81,129.64 L605.19,129.64 L605.00,128.06 L604.19,127.73 L602.94,128.71 L601.79,127.56 L602.77,126.31 L602.44,125.50 L600.86,125.31 L600.86,123.69 L602.44,123.50 L602.77,122.69 L601.79,121.44 L602.94,120.29 L604.19,121.27Z M604.60,124.50 a1.4,1.4 0 1,0 2.8,0 a1.4,1.4 0 1,0 -2.8,0Z" fill="#eef4fa" stroke="#1a4a70" stroke-width="1.1" fill-rule="evenodd"/>
<path d="M610.76,116.62 L610.91,115.25 L612.29,115.25 L612.44,116.62 L613.11,116.90 L614.19,116.04 L615.16,117.01 L614.30,118.09 L614.58,118.76 L615.95,118.91 L615.95,120.29 L614.58,120.44 L614.30,121.11 L615.16,122.19 L614.19,123.16 L613.11,122.30 L612.44,122.58 L612.29,123.95 L610.91,123.95 L610.76,122.58 L610.09,122.30 L609.01,123.16 L608.04,122.19 L608.90,121.11 L608.62,120.44 L607.25,120.29 L607.25,118.91 L608.62,118.76 L608.90,118.09 L608.04,117.01 L609.01,116.04 L610.09,116.90Z M610.40,119.60 a1.2,1.2 0 1,0 2.4,0 a1.2,1.2 0 1,0 -2.4,0Z" fill="#eef4fa" stroke="#1a4a70" stroke-width="1.1" fill-rule="evenodd"/>
<path d="M609.6,121.6 L615.6,122.6 V130.2 L609.6,129.4Z" fill="#d4d8dc" stroke="#8a9096" stroke-width="0.5"/><path d="M610.6,124 l3.6,0.6 M610.6,125.8 l3.6,0.6 M610.6,127.6 l3.6,0.6" stroke="#7a8086" stroke-width="0.6"/>
<g opacity="0.38"><circle cx="741.4" cy="106.4" r="14" fill="#fff" stroke="#5c5c5c" stroke-width="1"/><circle cx="741.4" cy="106.4" r="11.25" fill="url(#gbigR)" stroke="#8a8a8a" stroke-width="0.9"/><path d="M730.4,107.9 Q741.4,103.4 752.4,107.9 A11.2,11.2 0 0,1 730.4,107.9Z" fill="#ff9aa4" opacity=".35"/><rect x="734.1" y="103.5" width="14.8" height="5.7" rx="0.6" fill="#fff" stroke="#ccc" stroke-width="0.5"/></g>
<g opacity=".42"><path d="M777.8,93.5 L791.9,95.3 V119.8 L777,116.1Z" fill="#eaf1f8" stroke="#a8b8c8" stroke-width="0.7"/><path d="M779.6,99.6 l3,3.2 l5.2,-3.6" fill="none" stroke="#3ab03a" stroke-width="1.8"/><path d="M780.4,108 l9,1.2 M780.4,111 l9,1.2" stroke="#c4d0dc" stroke-width="0.7"/><path d="M788,112.4 L795.2,96 L798,97.2 L790.6,113.6 L787.6,115.4Z" fill="#4ccc4c" stroke="#3aa83a" stroke-width="0.4"/><path d="M788,112.4 L790.6,113.6 L787.6,115.4Z" fill="#e0c890"/></g>
<path d="M1728.8,92.2 a10.2,10.2 0 0,1 10.2,10.2 c0,4.6 -3.6,8.4 -6,11.4 L1726.6,120.9 C1724.6,114.6 1718.6,108.8 1718.6,102.4 a10.2,10.2 0 0,1 10.2,-10.2Z" fill="#000"/><circle cx="1728.8" cy="102.4" r="5.7" fill="#fff"/><circle cx="1728.8" cy="102.4" r="3.3" fill="#000"/>
<circle cx="1736.9" cy="115.3" r="7.2" fill="#fff"/>
<path d="M1735.62,110.16 L1735.84,107.87 L1737.96,107.87 L1738.18,110.16 L1739.63,110.76 L1741.40,109.30 L1742.90,110.80 L1741.44,112.57 L1742.04,114.02 L1744.33,114.24 L1744.33,116.36 L1742.04,116.58 L1741.44,118.03 L1742.90,119.80 L1741.40,121.30 L1739.63,119.84 L1738.18,120.44 L1737.96,122.73 L1735.84,122.73 L1735.62,120.44 L1734.17,119.84 L1732.40,121.30 L1730.90,119.80 L1732.36,118.03 L1731.76,116.58 L1729.47,116.36 L1729.47,114.24 L1731.76,114.02 L1732.36,112.57 L1730.90,110.80 L1732.40,109.30 L1734.17,110.76Z M1734.20,115.30 a2.7,2.7 0 1,0 5.4,0 a2.7,2.7 0 1,0 -5.4,0Z" fill="#000" stroke="#fff" stroke-width="0.6" fill-rule="evenodd"/>
<g><path d="M1790,103 H1796 M1796,99 V118 M1796,99 H1801 M1796,107.6 H1801 M1796,118 H1794 M1796,112 L1808,113.6" fill="none" stroke="#b4b8bc" stroke-width="0.9"/><rect x="1783.6" y="98.6" width="9.4" height="12" fill="#c4c8cc" opacity=".8"/><rect x="1781.6" y="100.4" width="9.2" height="12.2" fill="#4a8acb"/><rect x="1783" y="102.6" width="6" height="6" fill="#8cb8e4" opacity=".8"/><rect x="1800.2" y="92.4" width="4.4" height="5" fill="#d63a4a" stroke="#e8b0b4" stroke-width="0.5"/><rect x="1793.6" y="96.8" width="5.6" height="7" fill="#2ea45c" stroke="#a8dcc0" stroke-width="0.5"/><rect x="1800.2" y="105.2" width="4.6" height="5.4" fill="#d63a4a" stroke="#e8b0b4" stroke-width="0.5"/><rect x="1793.6" y="114" width="5.8" height="7.2" fill="#2ea45c" stroke="#a8dcc0" stroke-width="0.5"/></g>
<g><circle cx="1853.6" cy="106.5" r="14" fill="#fff" stroke="#5c5c5c" stroke-width="1"/><circle cx="1853.6" cy="106.5" r="11.25" fill="url(#gbigG)" stroke="#8a8a8a" stroke-width="0.9"/><path d="M1842.6,108.0 Q1853.6,103.5 1864.6,108.0 A11.2,11.2 0 0,1 1842.6,108.0Z" fill="#8fe08f" opacity=".35"/><path d="M1842.1999999999998,106.5 L1849.0,100.9 V104.3 H1858.1999999999998 V100.9 L1865.0,106.5 L1858.1999999999998,112.1 V108.7 H1849.0 V112.1Z" fill="#fff" stroke="#e4e4e4" stroke-width="0.4"/></g>
</svg>
<span class="t" style='left:332.7px;top:127.5px;font:400 12px/1 "Liberation Sans", sans-serif;letter-spacing:0px;color:#242424;transform:scaleX(0.9491);transform-origin:0 0;'>New</span>
<span class="t" style='left:378.2px;top:127.5px;font:400 12px/1 "Liberation Sans", sans-serif;letter-spacing:0px;color:#242424;transform:scaleX(0.9321);transform-origin:0 0;'>From</span>
<span class="t" style='left:367.6px;top:144.5px;font:400 12px/1 "Liberation Sans", sans-serif;letter-spacing:-0.26px;color:#242424;'>Template</span>
<span class="t" style='left:425.2px;top:127.5px;font:400 12px/1 "Liberation Sans", sans-serif;letter-spacing:0px;color:#242424;transform:scaleX(0.9321);transform-origin:0 0;'>From</span>
<span class="t" style='left:431.0px;top:144.5px;font:400 12px/1 "Liberation Sans", sans-serif;letter-spacing:0px;color:#242424;transform:scaleX(0.8998);transform-origin:0 0;'>V7</span>
<span class="t" style='left:328.7px;top:167.5px;font:400 12px/1 "Liberation Sans", sans-serif;letter-spacing:-0.025px;color:#242424;'>Create Work Instruction</span>
<div style="left:459px;top:90px;width:1px;height:89px;background:#d4d4d4;"></div>
<span class="t" style='left:464.7px;top:127.5px;font:400 12px/1 "Liberation Sans", sans-serif;letter-spacing:0.116px;color:#242424;'>Import From</span>
<span class="t" style='left:471.6px;top:144.5px;font:400 12px/1 "Liberation Sans", sans-serif;letter-spacing:-0.194px;color:#242424;'>Document</span>
<span class="t" style='left:548.6px;top:127.5px;font:400 12px/1 "Liberation Sans", sans-serif;letter-spacing:0px;color:#242424;transform:scaleX(0.931);transform-origin:0 0;'>Link To</span>
<span class="t" style='left:539.3px;top:144.5px;font:400 12px/1 "Liberation Sans", sans-serif;letter-spacing:-0.18px;color:#242424;'>Document</span>
<span class="t" style='left:619.5px;top:94px;font:400 12px/1 "Liberation Sans", sans-serif;letter-spacing:-0.165px;color:#242424;'>From Library</span>
<span class="t" style='left:619.5px;top:118px;font:400 12px/1 "Liberation Sans", sans-serif;letter-spacing:-0.346px;color:#242424;'>From Any Process</span>
<span class="t" style='left:579.2px;top:167.5px;font:400 12px/1 "Liberation Sans", sans-serif;letter-spacing:0px;color:#242424;'>Add</span>
<div style="left:719px;top:90px;width:1px;height:89px;background:#d4d4d4;"></div>
<span class="t" style='left:725.8px;top:127.5px;font:400 12px/1 "Liberation Sans", sans-serif;letter-spacing:0px;color:#b9b9b9;transform:scaleX(0.9368);transform-origin:0 0;'>Delete</span>
<span class="t" style='left:766.9px;top:127.5px;font:400 12px/1 "Liberation Sans", sans-serif;letter-spacing:0px;color:#b9b9b9;transform:scaleX(0.9444);transform-origin:0 0;'>Mark as</span>
<span class="t" style='left:767.7px;top:144.5px;font:400 12px/1 "Liberation Sans", sans-serif;letter-spacing:0px;color:#b9b9b9;transform:scaleX(0.9363);transform-origin:0 0;'>Primary</span>
<div style="left:813px;top:90px;width:1px;height:89px;background:#d4d4d4;"></div>
<div style="left:1688px;top:85px;width:1px;height:97px;background:#b0b0b0;"></div>
<span class="t" style='left:1705.6px;top:126px;font:400 12px/1 "Liberation Sans", sans-serif;letter-spacing:-0.245px;color:#242424;'>Circuit</span>
<span class="t" style='left:1705.6px;top:142px;font:400 12px/1 "Liberation Sans", sans-serif;letter-spacing:0.257px;color:#242424;'>Mapping</span>
<span class="t" style='left:1772.6px;top:126px;font:400 12px/1 "Liberation Sans", sans-serif;letter-spacing:0.112px;color:#242424;'>Material</span>
<span class="t" style='left:1772.6px;top:142px;font:400 12px/1 "Liberation Sans", sans-serif;letter-spacing:0px;color:#242424;transform:scaleX(0.9468);transform-origin:0 0;'>Setup</span>
<span class="t" style='left:1837.2px;top:126px;font:400 12px/1 "Liberation Sans", sans-serif;letter-spacing:-0.257px;color:#242424;'>Entry /</span>
<span class="t" style='left:1837.2px;top:142px;font:400 12px/1 "Liberation Sans", sans-serif;letter-spacing:0px;color:#242424;transform:scaleX(0.8612);transform-origin:0 0;'>Exit</span>
</div>
<div id="workspace" class="grp">
<div style="left:320px;top:182px;width:1584px;height:842px;background:#363636;"></div>
<div style="left:320px;top:299px;width:20px;height:234px;background:#c3ced6;"></div>
<div style="left:340px;top:232px;width:1514px;height:742px;background:#c3ced6;"></div>
<span class="t" style='left:362.4px;top:253px;font:400 18.3px/1 "Liberation Sans", sans-serif;letter-spacing:0px;color:#0c0c0c;-webkit-text-stroke:0.38px #c3ced6;transform:scaleX(0.8845);transform-origin:0 0;'>Settings</span>
<div style="left:1807px;top:254px;width:20px;height:20px;background:#e4e4e4;border:1px solid #8e8e8e;"></div>
<div style="left:355px;top:280px;width:91px;height:23px;background:linear-gradient(#f2f2f2,#e6e6e6);border:1px solid #acacac;"></div>
<div style="left:540px;top:280px;width:111px;height:23px;background:linear-gradient(#f2f2f2,#e6e6e6);border:1px solid #acacac;"></div>
<div style="left:352px;top:302px;width:1490px;height:628px;background:#fff;border:1px solid #acacac;"></div>
<div style="left:445px;top:278px;width:96px;height:25px;background:#fff;border:1px solid #acacac;border-bottom:none;"></div>
<div style="left:446px;top:302px;width:94px;height:1px;background:#fff;"></div>
<span class="t" style='left:369.4px;top:286px;font:700 12px/1 "Liberation Sans", sans-serif;letter-spacing:-0.107px;color:#222;'>Instruction</span>
<span class="t" style='left:454.0px;top:286px;font:400 12px/1 "Liberation Sans", sans-serif;letter-spacing:-0.081px;color:#222;'>Activity Details</span>
<span class="t" style='left:549.9px;top:286px;font:400 12px/1 "Liberation Sans", sans-serif;letter-spacing:-0.229px;color:#222;'>Part Assignments</span>
<div style="left:441px;top:314px;width:13px;height:13px;background:#fff;border:1px solid #707070;"></div>
<span class="t" style='left:457.5px;top:315.5px;font:400 12px/1 "Liberation Sans", sans-serif;letter-spacing:-0.15px;color:#222;'>Is Activity Required?</span>
<span class="t" style='left:362.7px;top:352px;font:400 16px/1 "Liberation Sans", sans-serif;letter-spacing:-0.358px;color:#161616;-webkit-text-stroke:0.3px #fff;'>Configuration Options</span>
<span class="t" style='left:362.7px;top:383.7px;font:400 12px/1 "Liberation Sans", sans-serif;letter-spacing:-0.156px;color:#111;'>Option Codes:</span>
<div style="left:441px;top:378px;width:1391px;height:22px;background:#fff;border:1px solid #7eb4ea;border-bottom-color:#569de5;"></div>
<span class="t" style='left:446.9px;top:383.7px;font:400 12px/1 "Liberation Sans", sans-serif;letter-spacing:0px;color:#111;transform:scaleX(0.786);transform-origin:0 0;'>US</span>
<div style="left:1815px;top:380px;width:15px;height:18px;background:linear-gradient(#d6e9fb,#c6dffa);border:1px solid #4d93e2;"></div>
<div style="left:441px;top:400px;width:1391px;height:300px;background:#fff;border:1px solid #8a8a8a;border-top:2px solid #7c8189;border-left:2px solid #8a8e94;"></div>
<div style="left:443px;top:402px;width:691px;height:261px;background:#fff;border:1px solid #b4b4b4;border-left:none;border-top:none;"></div>
<div style="left:1138px;top:402px;width:693px;height:261px;background:#fff;border:1px solid #b4b4b4;border-top:none;border-right:2px solid #b0b0b8;"></div>
<div style="left:443px;top:428px;width:690px;height:1px;background:#b4b4b4;"></div>
<div style="left:1139px;top:428px;width:690px;height:1px;background:#b4b4b4;"></div>
<span class="t" style='left:454.2px;top:410.3px;font:400 12px/1 "Liberation Sans", sans-serif;letter-spacing:-0.08px;color:#111;'>Option Codes</span>
<span class="t" style='left:1149.8px;top:410.3px;font:400 12px/1 "Liberation Sans", sans-serif;letter-spacing:0.045px;color:#111;'>Applied Option Codes</span>
<span class="t" style='left:483.2px;top:434.2px;font:400 12px/1 "Liberation Sans", sans-serif;letter-spacing:0.067px;color:#333;'>Configuration Options</span>
<span class="t" style='left:510.0px;top:453.7px;font:700 12px/1 "Liberation Sans", sans-serif;letter-spacing:0px;color:#333;transform:scaleX(0.96);transform-origin:0 0;'>CN</span>
<span class="t" style='left:510.0px;top:473.5px;font:700 12px/1 "Liberation Sans", sans-serif;letter-spacing:0px;color:#333;transform:scaleX(0.9);transform-origin:0 0;'>DE</span>
<span class="t" style='left:510.0px;top:493.3px;font:700 12px/1 "Liberation Sans", sans-serif;letter-spacing:0px;color:#333;transform:scaleX(0.8178);transform-origin:0 0;'>JP</span>
<div style="left:1179px;top:429px;width:650px;height:20px;background:#dcdcdc;"></div>
<span class="t" style='left:1182.5px;top:434px;font:700 12px/1 "Liberation Sans", sans-serif;letter-spacing:0px;color:#333;transform:scaleX(0.9);transform-origin:0 0;'>US</span>
<div style="left:1078px;top:671px;width:56px;height:22px;background:linear-gradient(#f3f3f3,#dfdfdf);border:1px solid #adadad;"></div>
<div style="left:1140px;top:671px;width:55px;height:22px;background:linear-gradient(#f3f3f3,#dfdfdf);border:1px solid #adadad;"></div>
<span class="t" style='left:1098.0px;top:677px;font:400 12px/1 "Liberation Sans", sans-serif;letter-spacing:0px;color:#111;transform:scaleX(0.8942);transform-origin:0 0;'>OK</span>
<span class="t" style='left:1149.5px;top:677px;font:400 12px/1 "Liberation Sans", sans-serif;letter-spacing:-0.338px;color:#111;'>Cancel</span>
<div style="left:1764px;top:942px;width:75px;height:22px;background:linear-gradient(#f3f3f3,#dfdfdf);border:1px solid #adadad;"></div>
<span class="t" style='left:1794.0px;top:948px;font:400 12px/1 "Liberation Sans", sans-serif;letter-spacing:0px;color:#111;transform:scaleX(0.8942);transform-origin:0 0;'>OK</span>
<svg width="1920" height="1040" viewBox="0 0 1920 1040" style="left:0;top:0">
<defs><linearGradient id="gfold" x1="0" x2="1" y1="0" y2="1"><stop offset="0" stop-color="#fbe35a"/><stop offset=".5" stop-color="#f5bb1c"/><stop offset="1" stop-color="#e79a0c"/></linearGradient></defs>
<g><circle cx="1816.9" cy="263.9" r="6.50" fill="#fff" stroke="#676767" stroke-width="1.00"/><circle cx="1816.9" cy="263.9" r="4.65" fill="#e4002b" stroke="#8d8d8d" stroke-width="0.60"/><path d="M1814.3,261.3 L1819.5,266.5 M1819.5,261.3 L1814.3,266.5" stroke="#fff" stroke-width="1.9"/></g>
<path d="M1819,386.2 L1822.5,390.6 L1826,386.2" fill="none" stroke="#444" stroke-width="2"/>
<path d="M450.2,441.9 H455.9 V436Z" fill="#595959"/>
<g><path d="M468.6,434.6 q0,-1.2 1.2,-1.3 l3.6,-0.3 l1.2,1.2 l4.4,-0.6 q1,0 1,1 V443 q0,1 -1,1 L468.6,444.2Z" fill="#e9a512"/><path d="M467.2,436.6 q0,-1 1,-1.1 l9.6,-0.9 q1,0 1,1 V443.2 q0,1 -1,1 H468.2 q-1,0 -1,-1Z" fill="url(#gfold)"/><rect x="468.8" y="437.7" width="3.2" height="1.2" rx=".5" fill="#fff"/></g>
<g transform="translate(486,454.2)"><rect x="0.5" y="0.5" width="13" height="7.9" rx="1.6" fill="#fff" stroke="#87939f" stroke-width="1"/><path d="M3,7 H11.4" stroke="#b4c6da" stroke-width="0.9"/><path d="M2.5,2.1 V7.1 M11.5,2.1 V7.1" stroke="#111" stroke-width="0.85"/><path d="M4.5,2.1 V4.9 M6.5,2.1 V4.9 M8.4,2.1 V4.9 M9.9,2.1 V4.9" stroke="#111" stroke-width="0.8"/></g>
<g transform="translate(486,474.2)"><rect x="0.5" y="0.5" width="13" height="7.9" rx="1.6" fill="#fff" stroke="#87939f" stroke-width="1"/><path d="M3,7 H11.4" stroke="#b4c6da" stroke-width="0.9"/><path d="M2.5,2.1 V7.1 M11.5,2.1 V7.1" stroke="#111" stroke-width="0.85"/><path d="M4.5,2.1 V4.9 M6.5,2.1 V4.9 M8.4,2.1 V4.9 M9.9,2.1 V4.9" stroke="#111" stroke-width="0.8"/></g>
<g transform="translate(486,494.2)"><rect x="0.5" y="0.5" width="13" height="7.9" rx="1.6" fill="#fff" stroke="#87939f" stroke-width="1"/><path d="M3,7 H11.4" stroke="#b4c6da" stroke-width="0.9"/><path d="M2.5,2.1 V7.1 M11.5,2.1 V7.1" stroke="#111" stroke-width="0.85"/><path d="M4.5,2.1 V4.9 M6.5,2.1 V4.9 M8.4,2.1 V4.9 M9.9,2.1 V4.9" stroke="#111" stroke-width="0.8"/></g>
<g transform="translate(1162,434.3)"><rect x="0.5" y="0.5" width="13" height="7.9" rx="1.6" fill="#fff" stroke="#87939f" stroke-width="1"/><path d="M3,7 H11.4" stroke="#b4c6da" stroke-width="0.9"/><path d="M2.5,2.1 V7.1 M11.5,2.1 V7.1" stroke="#111" stroke-width="0.85"/><path d="M4.5,2.1 V4.9 M6.5,2.1 V4.9 M8.4,2.1 V4.9 M9.9,2.1 V4.9" stroke="#111" stroke-width="0.8"/></g>
<g><circle cx="1110.9" cy="415" r="6.50" fill="#fff" stroke="#676767" stroke-width="1.00"/><circle cx="1110.9" cy="415" r="4.65" fill="#1fae1f" stroke="#8d8d8d" stroke-width="0.60"/><path d="M1114.1000000000001,415 L1110.6000000000001,418.2 V416 H1107.9 V414 H1110.6000000000001 V411.8Z" fill="#fff"/></g>
<g><circle cx="1807.9" cy="415" r="6.50" fill="#fff" stroke="#676767" stroke-width="1.00"/><circle cx="1807.9" cy="415" r="4.65" fill="#e4002b" stroke="#8d8d8d" stroke-width="0.60"/><path d="M1805.1000000000001,415H1810.7" stroke="#fff" stroke-width="1.4"/></g>
<g fill="#9a9a9a"><rect x="1827" y="690" width="2" height="2"/><rect x="1827" y="693" width="2" height="2"/><rect x="1824" y="693" width="2" height="2"/><rect x="1827" y="696" width="2" height="1.6"/><rect x="1824" y="696" width="2" height="1.6"/><rect x="1821" y="696" width="2" height="1.6"/></g>
</svg>
</div>
</body></html>
